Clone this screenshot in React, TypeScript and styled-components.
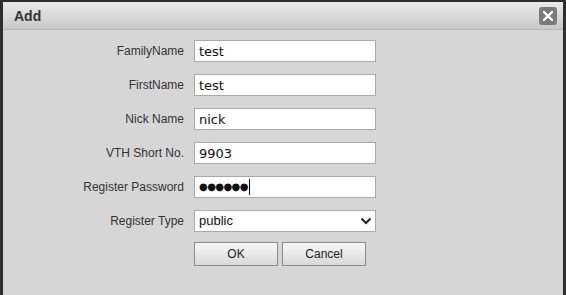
import { Fragment } from "react";
import styled, { createGlobalStyle } from "styled-components";

const GlobalStyle = createGlobalStyle`
    html, body {
        margin: 0;
        padding: 0;
        background: #2e2e2e;
    }
`;

const fields = [
    { label: "FamilyName", value: "test" },
    { label: "FirstName", value: "test" },
    { label: "Nick Name", value: "nick" },
    { label: "VTH Short No.", value: "9903" },
];

const Frame = styled.div`
    width: 560px;
    height: 293px;
    border-left: 3px solid #2e2e2e;
    border-right: 3px solid #2e2e2e;
    border-top: 2px solid #2e2e2e;
    background: #d6d6d6;
    display: flex;
    flex-direction: column;
    font-family: "Liberation Sans", Arial, sans-serif;
`;

const TitleBar = styled.div`
    height: 27px;
    display: flex;
    align-items: center;
    justify-content: space-between;
    padding: 0 6px 0 11px;
    background: linear-gradient(#ebebeb, #c8c8c8);
    border-bottom: 1px solid #b8b8b8;
`;

const Title = styled.span`
    font-size: 14px;
    font-weight: bold;
    color: #333;
`;

const CloseButton = styled.button`
    width: 18px;
    height: 18px;
    padding: 0;
    border: none;
    border-radius: 3px;
    background: #7a7a7a;
    display: flex;
    align-items: center;
    justify-content: center;
`;

const Form = styled.div`
    display: grid;
    grid-template-columns: 181px 182px;
    grid-auto-rows: 22px;
    column-gap: 10px;
    row-gap: 12px;
    align-items: center;
    padding-top: 10px;
`;

const Label = styled.label`
    text-align: right;
    font-size: 12px;
    line-height: 14px;
    color: #333;
`;

const TextInput = styled.input`
    box-sizing: border-box;
    width: 182px;
    height: 22px;
    margin: 0;
    padding: 0 4px;
    border: 1px solid #a9a9a9;
    background: #fff;
    font-family: "DejaVu Sans", Verdana, sans-serif;
    font-size: 13px;
    color: #111;
    outline: none;
`;

const PasswordBox = styled.div`
    box-sizing: border-box;
    width: 182px;
    height: 22px;
    padding: 0 4px;
    border: 1px solid #a9a9a9;
    background: #fff;
    display: flex;
    align-items: center;
`;

const Dots = styled.span`
    font-family: "DejaVu Sans", sans-serif;
    font-size: 10px;
    letter-spacing: -0.6px;
    line-height: 14px;
    color: #111;
`;

const Caret = styled.span`
    width: 1px;
    height: 16px;
    margin-left: 1px;
    background: #000;
`;

const SelectWrap = styled.div`
    position: relative;
    width: 182px;
    height: 22px;
    margin-top: -1px;
`;

const Select = styled.select`
    box-sizing: border-box;
    width: 100%;
    height: 100%;
    margin: 0;
    padding: 0 4px;
    border: 1px solid #a9a9a9;
    border-radius: 0;
    background: #fff;
    appearance: none;
    font-family: "Liberation Sans", Arial, sans-serif;
    font-size: 13px;
    color: #111;
    outline: none;
`;

const Chevron = styled.svg`
    position: absolute;
    right: 4px;
    top: 7px;
    pointer-events: none;
`;

const Buttons = styled.div`
    grid-column: 2;
    display: flex;
    align-items: center;
    gap: 4px;
    height: 24px;
    margin-top: -2px;
`;

const Button = styled.button`
    width: 84px;
    height: 24px;
    margin: 0;
    border: 1px solid #8c8c8c;
    background: linear-gradient(#f7f7f7, #d9d9d9);
    font-family: "Liberation Sans", Arial, sans-serif;
    font-size: 12px;
    color: #222;
`;

export default function App() {
    return (
        <>
            <GlobalStyle />
            <Frame>
                <TitleBar>
                    <Title>Add</Title>
                    <CloseButton>
                        <svg width="12" height="12" viewBox="0 0 12 12">
                            <path
                                d="M2 2 L10 10 M10 2 L2 10"
                                stroke="#fff"
                                strokeWidth="2.4"
                                strokeLinecap="round"
                            />
                        </svg>
                    </CloseButton>
                </TitleBar>
                <Form>
                    {fields.map((f) => (
                        <Fragment key={f.label}>
                            <Label>{f.label}</Label>
                            <TextInput defaultValue={f.value} readOnly />
                        </Fragment>
                    ))}
                    <Label>Register Password</Label>
                    <PasswordBox>
                        <Dots>●●●●●●</Dots>
                        <Caret />
                    </PasswordBox>
                    <Label>Register Type</Label>
                    <SelectWrap>
                        <Select defaultValue="public">
                            <option value="public">public</option>
                            <option value="private">private</option>
                        </Select>
                        <Chevron width="12" height="8" viewBox="0 0 12 8">
                            <path
                                d="M1.5 1.5 L6 6 L10.5 1.5"
                                fill="none"
                                stroke="#222"
                                strokeWidth="2"
                            />
                        </Chevron>
                    </SelectWrap>
                    <Buttons>
                        <Button>OK</Button>
                        <Button>Cancel</Button>
                    </Buttons>
                </Form>
            </Frame>
        </>
    );
}
